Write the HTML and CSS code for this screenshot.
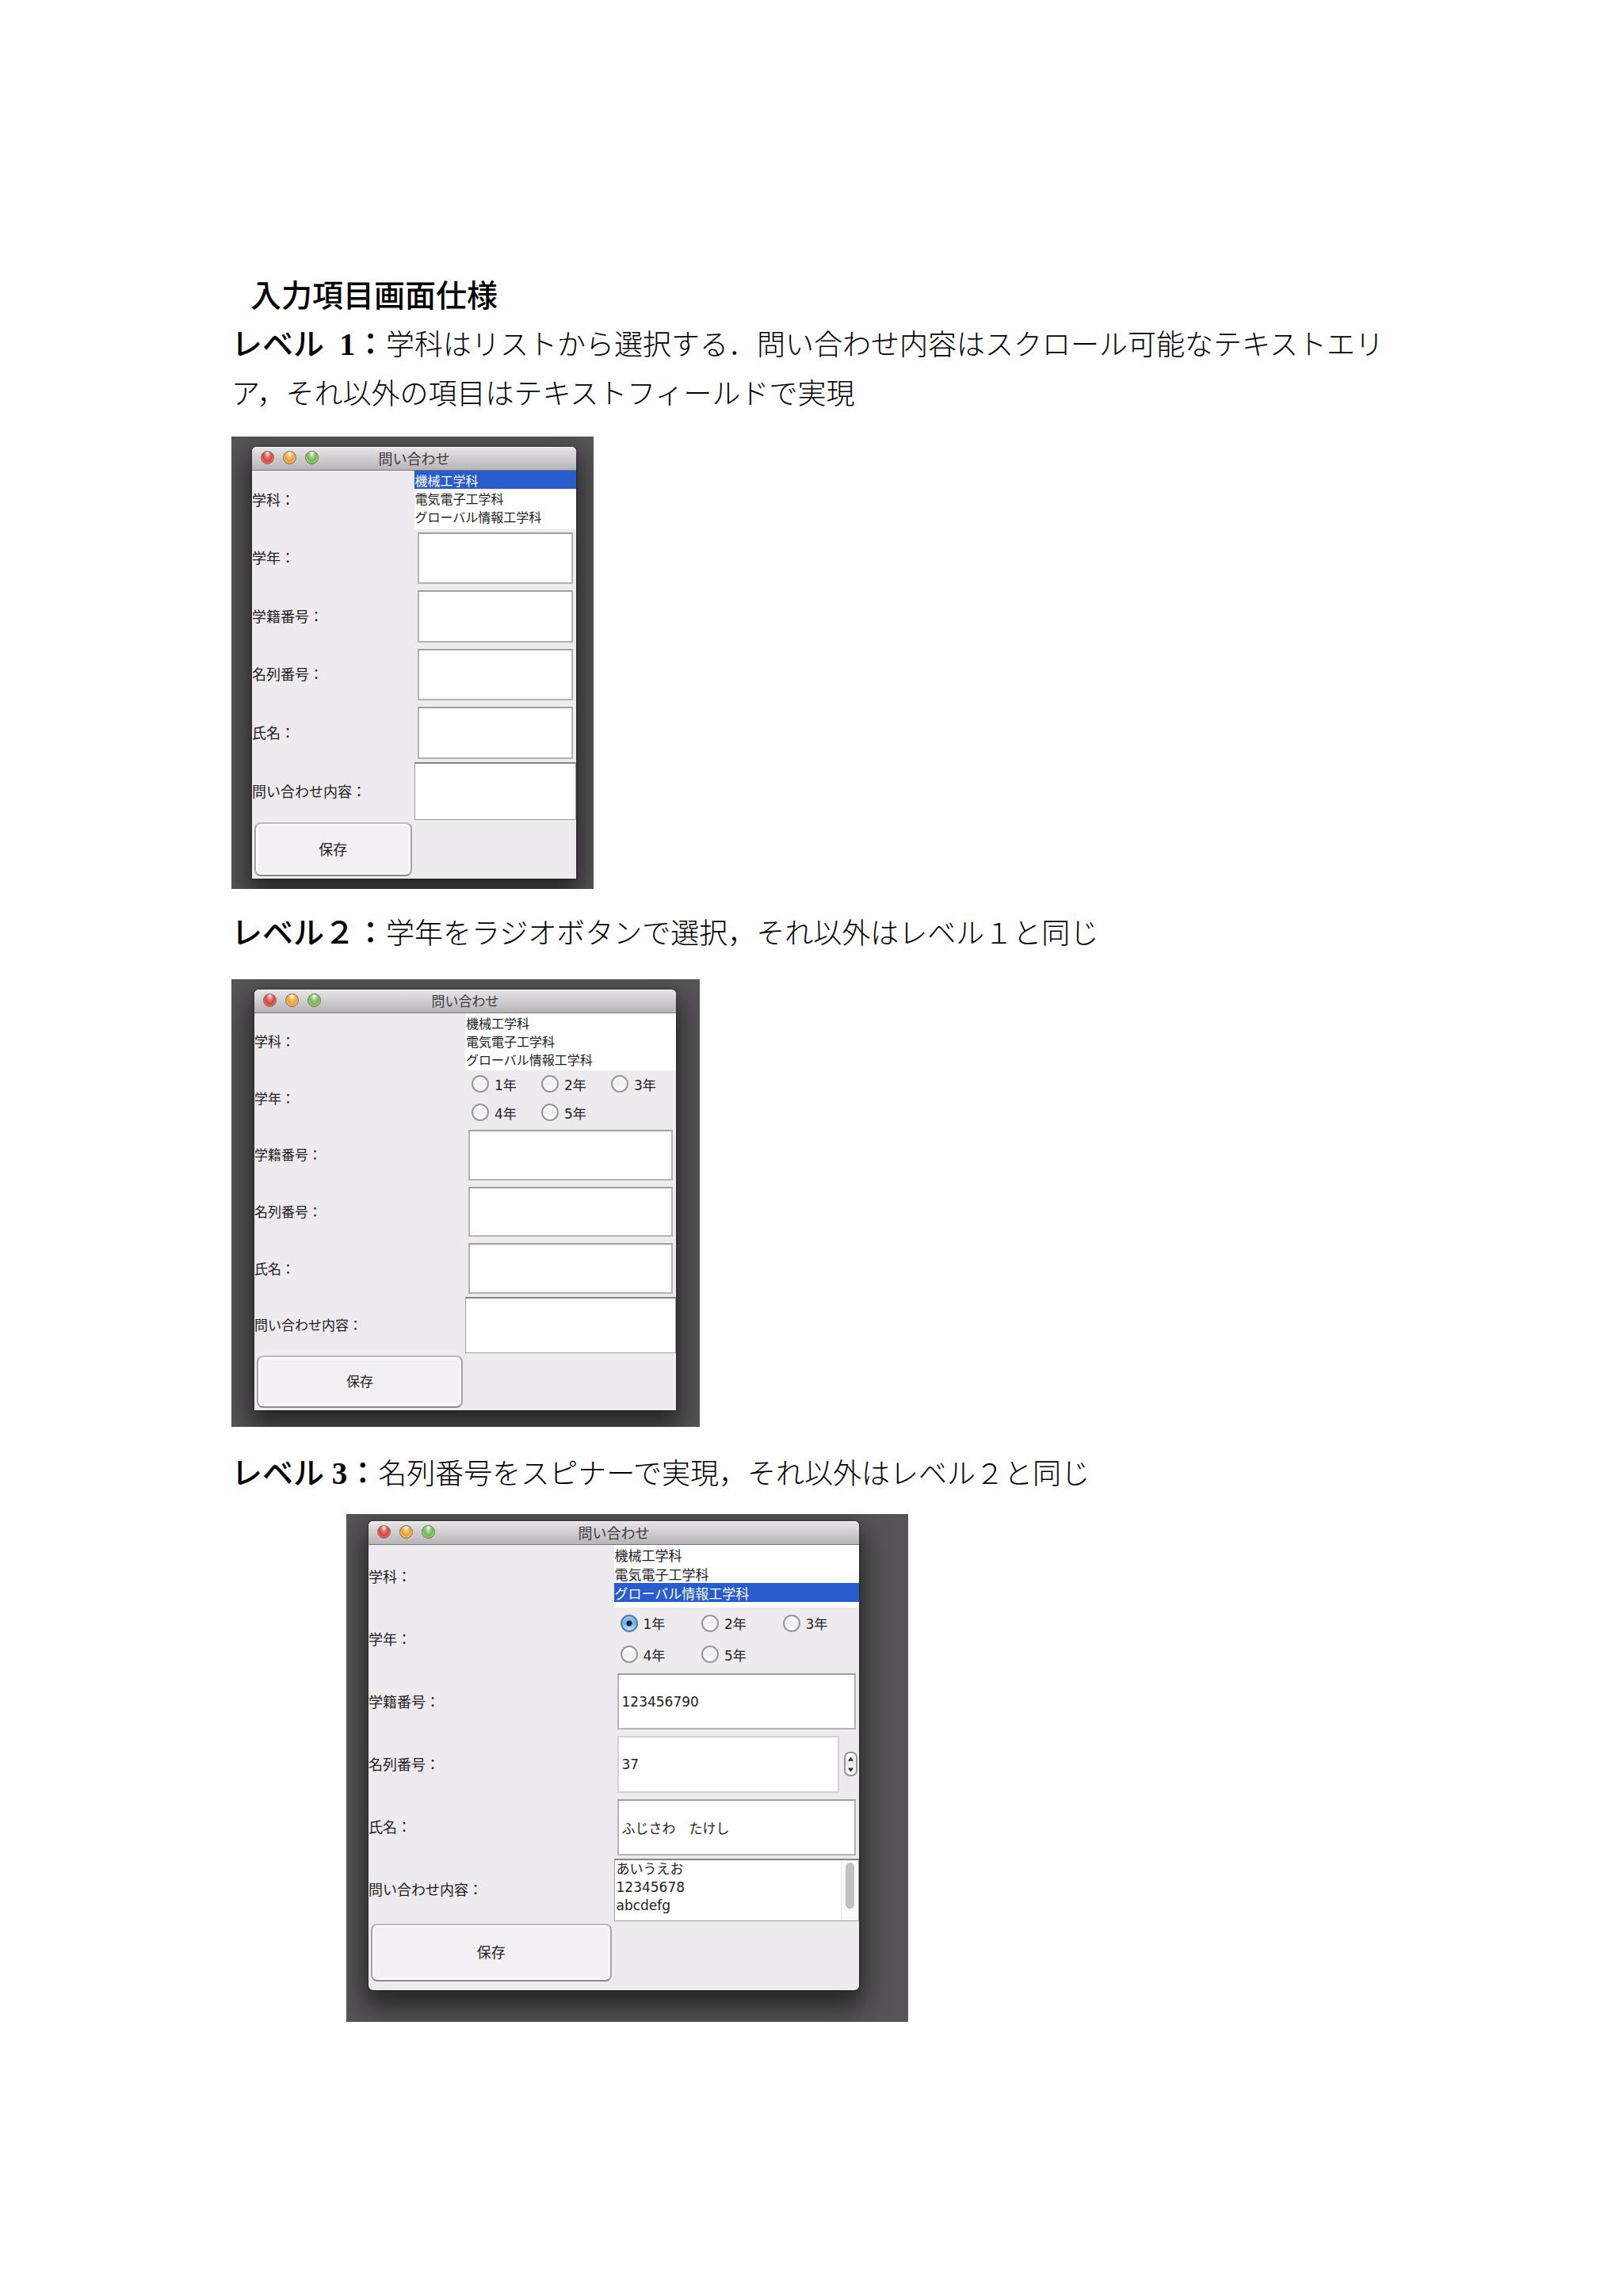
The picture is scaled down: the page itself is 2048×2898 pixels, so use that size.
FILE: index.html
```
<!DOCTYPE html>
<html lang="ja">
<head>
    <meta charset="UTF-8">
    <meta name="viewport" content="width=device-width, initial-scale=1.0">
    <title>入力項目画面仕様</title>
    <link rel="stylesheet" href="styles.css">
</head>
<body>

<main class="page">
    <h1>入力項目画面仕様</h1>

    <p><strong>レベル&ensp;<b>1</b>：</strong>学科はリストから選択する．問い合わせ内容はスクロール可能なテキストエリア，それ以外の項目はテキストフィールドで実現</p>

    <div class="shot level1">
        <div class="window">
            <div class="titlebar">
                <div class="lights"><i class="red"></i><i class="yellow"></i><i class="green"></i></div>
                問い合わせ
            </div>
            <form class="form">
                <label for="dept1">学科：</label>
                <select id="dept1" class="list" size="3">
                    <option selected>機械工学科</option>
                    <option>電気電子工学科</option>
                    <option>グローバル情報工学科</option>
                </select>

                <label for="grade1">学年：</label>
                <input type="text" class="field" id="grade1">

                <label for="id1">学籍番号：</label>
                <input type="text" class="field" id="id1">

                <label for="no1">名列番号：</label>
                <input type="text" class="field" id="no1">

                <label for="name1">氏名：</label>
                <input type="text" class="field" id="name1">

                <label for="body1">問い合わせ内容：</label>
                <textarea class="area" id="body1"></textarea>

                <button type="button" class="save">保存</button>
            </form>
        </div>
    </div>

    <p><strong>レベル２：</strong>学年をラジオボタンで選択，それ以外はレベル１と同じ</p>

    <div class="shot level2">
        <div class="window">
            <div class="titlebar">
                <div class="lights"><i class="red"></i><i class="yellow"></i><i class="green"></i></div>
                問い合わせ
            </div>
            <form class="form">
                <label for="dept2">学科：</label>
                <select id="dept2" class="list" size="3">
                    <option>機械工学科</option>
                    <option>電気電子工学科</option>
                    <option>グローバル情報工学科</option>
                </select>

                <span class="caption" id="grade2">学年：</span>
                <div class="radios" role="radiogroup" aria-labelledby="grade2">
                    <label><input type="radio" name="grade2">1年</label>
                    <label><input type="radio" name="grade2">2年</label>
                    <label><input type="radio" name="grade2">3年</label>
                    <label><input type="radio" name="grade2">4年</label>
                    <label><input type="radio" name="grade2">5年</label>
                </div>

                <label for="id2">学籍番号：</label>
                <input type="text" class="field" id="id2">

                <label for="no2">名列番号：</label>
                <input type="text" class="field" id="no2">

                <label for="name2">氏名：</label>
                <input type="text" class="field" id="name2">

                <label for="body2">問い合わせ内容：</label>
                <textarea class="area" id="body2"></textarea>

                <button type="button" class="save">保存</button>
            </form>
        </div>
    </div>

    <p><strong>レベル <b>3</b>：</strong>名列番号をスピナーで実現，それ以外はレベル２と同じ</p>

    <div class="shot level3">
        <div class="window">
            <div class="titlebar">
                <div class="lights"><i class="red"></i><i class="yellow"></i><i class="green"></i></div>
                問い合わせ
            </div>
            <form class="form">
                <label for="dept3">学科：</label>
                <select id="dept3" class="list" size="3">
                    <option>機械工学科</option>
                    <option>電気電子工学科</option>
                    <option selected>グローバル情報工学科</option>
                </select>

                <span class="caption" id="grade3">学年：</span>
                <div class="radios" role="radiogroup" aria-labelledby="grade3">
                    <label><input type="radio" name="grade3" checked>1年</label>
                    <label><input type="radio" name="grade3">2年</label>
                    <label><input type="radio" name="grade3">3年</label>
                    <label><input type="radio" name="grade3">4年</label>
                    <label><input type="radio" name="grade3">5年</label>
                </div>

                <label for="id3">学籍番号：</label>
                <input type="text" class="field" id="id3" value="123456790">

                <label for="no3">名列番号：</label>
                <div class="spinner">
                    <input type="text" class="field" id="no3" value="37">
                    <div class="stepper">
                        <button type="button" aria-label="増やす" onclick="step(1)"><svg viewBox="0 0 8 6"><path d="M4 0L8 6H0Z"/></svg></button>
                        <button type="button" aria-label="減らす" onclick="step(-1)"><svg viewBox="0 0 8 6"><path d="M0 0H8L4 6Z"/></svg></button>
                    </div>
                </div>

                <label for="name3">氏名：</label>
                <input type="text" class="field" id="name3" value="ふじさわ　たけし">

                <label for="body3">問い合わせ内容：</label>
                <div class="scroll-area">
                    <textarea class="area" id="body3">あいうえお
12345678
abcdefg
</textarea>
                    <div class="scrollbar"><div class="thumb"></div></div>
                </div>

                <button type="button" class="save">保存</button>
            </form>
        </div>
    </div>
</main>

<script>
    function step(diff) {
        const no = document.getElementById('no3');
        no.value = (parseInt(no.value) || 0) + diff;
    }
</script>

</body>
</html>
```
FILE: styles.css
```
* {
    box-sizing: border-box;
}
body {
    margin: 0;
    background-color: #fefefe;
    color: #000;
    font-family: "Liberation Serif", "Noto Sans CJK JP", serif;
}
.page {
    padding: 343px 292px 40px;
}
h1 {
    margin: 0;
    padding-left: 24px;
    font-size: 39px;
    font-weight: 500;
    line-height: 62px;
}
p {
    margin: 0;
    font-size: 36px;
    font-weight: 300;
    line-height: 62px;
}
p strong {
    font-size: 39px;
    font-weight: 500;
    line-height: 1;
}
p b {
    font-weight: 700;
}

/* dark desktop behind each window */
.shot {
    max-width: 100%;
    overflow: hidden;
    background-color: #565456;
    font-family: "DejaVu Sans", "Noto Sans CJK JP", sans-serif;
}
.level1 {
    width: 457px;
    margin: 22px 0 26px;
    padding: 13px 22px 13px 26px;
}
.level2 {
    width: 591px;
    margin: 26px 0 29px;
    padding: 13px 30px 21px 29px;
}
.level3 {
    width: 709px;
    margin: 19px 0 0 145px;
    padding: 9px 62px 40px 28px;
}

.window {
    background-color: #edebee;
    border-radius: 6px 6px 0 0;
    box-shadow: 0 0 3px rgba(0, 0, 0, 0.5), 0 16px 32px 6px rgba(0, 0, 0, 0.55);
    color: #222;
    font-size: 18px;
}
.level2 .window {
    font-size: 17px;
}
.level3 .window {
    padding-bottom: 8px;
    border-radius: 6px;
}
.titlebar {
    display: grid;
    grid-template-columns: 1fr auto 1fr;
    align-items: center;
    height: 30px;
    padding: 0 11px 2px;
    border-bottom: 1px solid #777;
    border-radius: 6px 6px 0 0;
    background-image: linear-gradient(#e8e6e8, #b6b4b6);
    box-shadow: inset 0 1px 0 #f4f4f4;
    color: #3c3c3c;
}
.lights {
    display: flex;
    gap: 11px;
}
.lights i {
    width: 17px;
    height: 17px;
    border: 1px solid #7a6a60;
    border-radius: 50%;
}
.red {
    background-image: radial-gradient(ellipse at 50% 15%, #fff 0, #f0807c 25%, #dc4040 55%, #ff9a90 100%);
}
.yellow {
    background-image: radial-gradient(ellipse at 50% 15%, #fff 0, #f6c878 25%, #e8a038 55%, #ffe878 100%);
}
.green {
    background-image: radial-gradient(ellipse at 50% 15%, #fff 0, #a8d890 25%, #70b858 55%, #c8f890 100%);
}

.form {
    display: grid;
    grid-template-columns: 1fr 1fr;
    grid-template-rows: repeat(7, minmax(0, 1fr));
    align-items: center;
    height: 515px;
}
.level2 .form {
    height: 501px;
}
.level3 .form {
    height: 554px;
}
.form > label,
.caption {
    padding-bottom: 2px;
}
.form select,
.form input,
.form textarea,
.form button {
    font-family: inherit;
    color: #222;
}
.list {
    width: 100%;
    height: 100%;
    padding: 0;
    border: none;
    border-radius: 0;
    outline: none;
    overflow: hidden;
    background-color: #fff;
    font-size: 16px;
}
.list option {
    height: 23px;
    min-height: 23px;
    padding: 0 1px;
    line-height: 20px;
}
.level3 .list {
    font-size: 17px;
}
.level3 .list option {
    height: 24px;
    line-height: 20px;
}
.list option:checked {
    background: linear-gradient(#295ccd, #295ccd);
    -webkit-text-fill-color: #fff;
}
.field {
    width: auto;
    min-width: 0;
    height: auto;
    align-self: stretch;
    margin: 4px;
    padding: 0 4px;
    border: 2px solid #b4b2b5;
    border-top-color: #a09ea1;
    background-color: #fff;
    font-size: 17px;
}
.area {
    display: block;
    width: 100%;
    height: 100%;
    padding: 0 2px;
    border: 1px solid #a09ea1;
    border-top: 2px solid #858386;
    background-color: #fff;
    font-size: 17px;
    line-height: 23px;
    resize: none;
}
.scroll-area {
    position: relative;
    height: 100%;
}
/* sits over the right edge of the textarea */
.scrollbar {
    position: absolute;
    top: 2px;
    right: 1px;
    bottom: 1px;
    width: 22px;
    padding: 3px 5px;
    border-left: 1px solid #e4e4e4;
    background-color: #fafafa;
}
.thumb {
    width: 11px;
    height: 58px;
    border-radius: 6px;
    background-color: #c2c0c3;
}
.save {
    align-self: stretch;
    margin: 3px;
    padding-bottom: 4px;
    border: 2px solid #a5a3a6;
    border-top-color: #bbb9bc;
    border-bottom-color: #8a888b;
    border-radius: 8px;
    background-color: #f2f0f3;
    box-shadow: inset 0 0 2px 2px #fff;
    font-size: inherit;
}

.radios {
    display: grid;
    grid-template-columns: repeat(3, 1fr);
    column-gap: 6px;
    align-self: stretch;
    padding-left: 8px;
}
.radios label {
    display: flex;
    align-items: center;
    gap: 7px;
    font-size: 17px;
}
.radios input {
    appearance: none;
    width: 22px;
    height: 22px;
    margin: 0;
    border: 2px solid #98969a;
    border-radius: 50%;
    background-image: linear-gradient(#fff, #eee 50%, #fff);
}
.radios input:checked {
    border-color: #5a7a9a;
    background-image: radial-gradient(circle, #0a1c38 0, #0a1c38 3px, transparent 4px), linear-gradient(#9cc4ee, #6aaef0 50%, #c0f0ff);
}

.spinner {
    display: flex;
    align-items: center;
    align-self: stretch;
    padding-right: 2px;
}
.spinner .field {
    flex: 1;
    margin-right: 6px;
    border-color: #d2d0d3;
}
.stepper {
    display: flex;
    flex-direction: column;
    width: 17px;
    height: 31px;
    border: 2px solid #98969a;
    border-radius: 7px;
    background-image: linear-gradient(#fff, #e8e8e8 50%, #fff);
}
.stepper button {
    display: flex;
    flex: 1;
    align-items: center;
    justify-content: center;
    padding: 0;
    border: none;
    background: none;
}
.stepper svg {
    width: 7px;
    height: 6px;
    fill: #333;
}
```
